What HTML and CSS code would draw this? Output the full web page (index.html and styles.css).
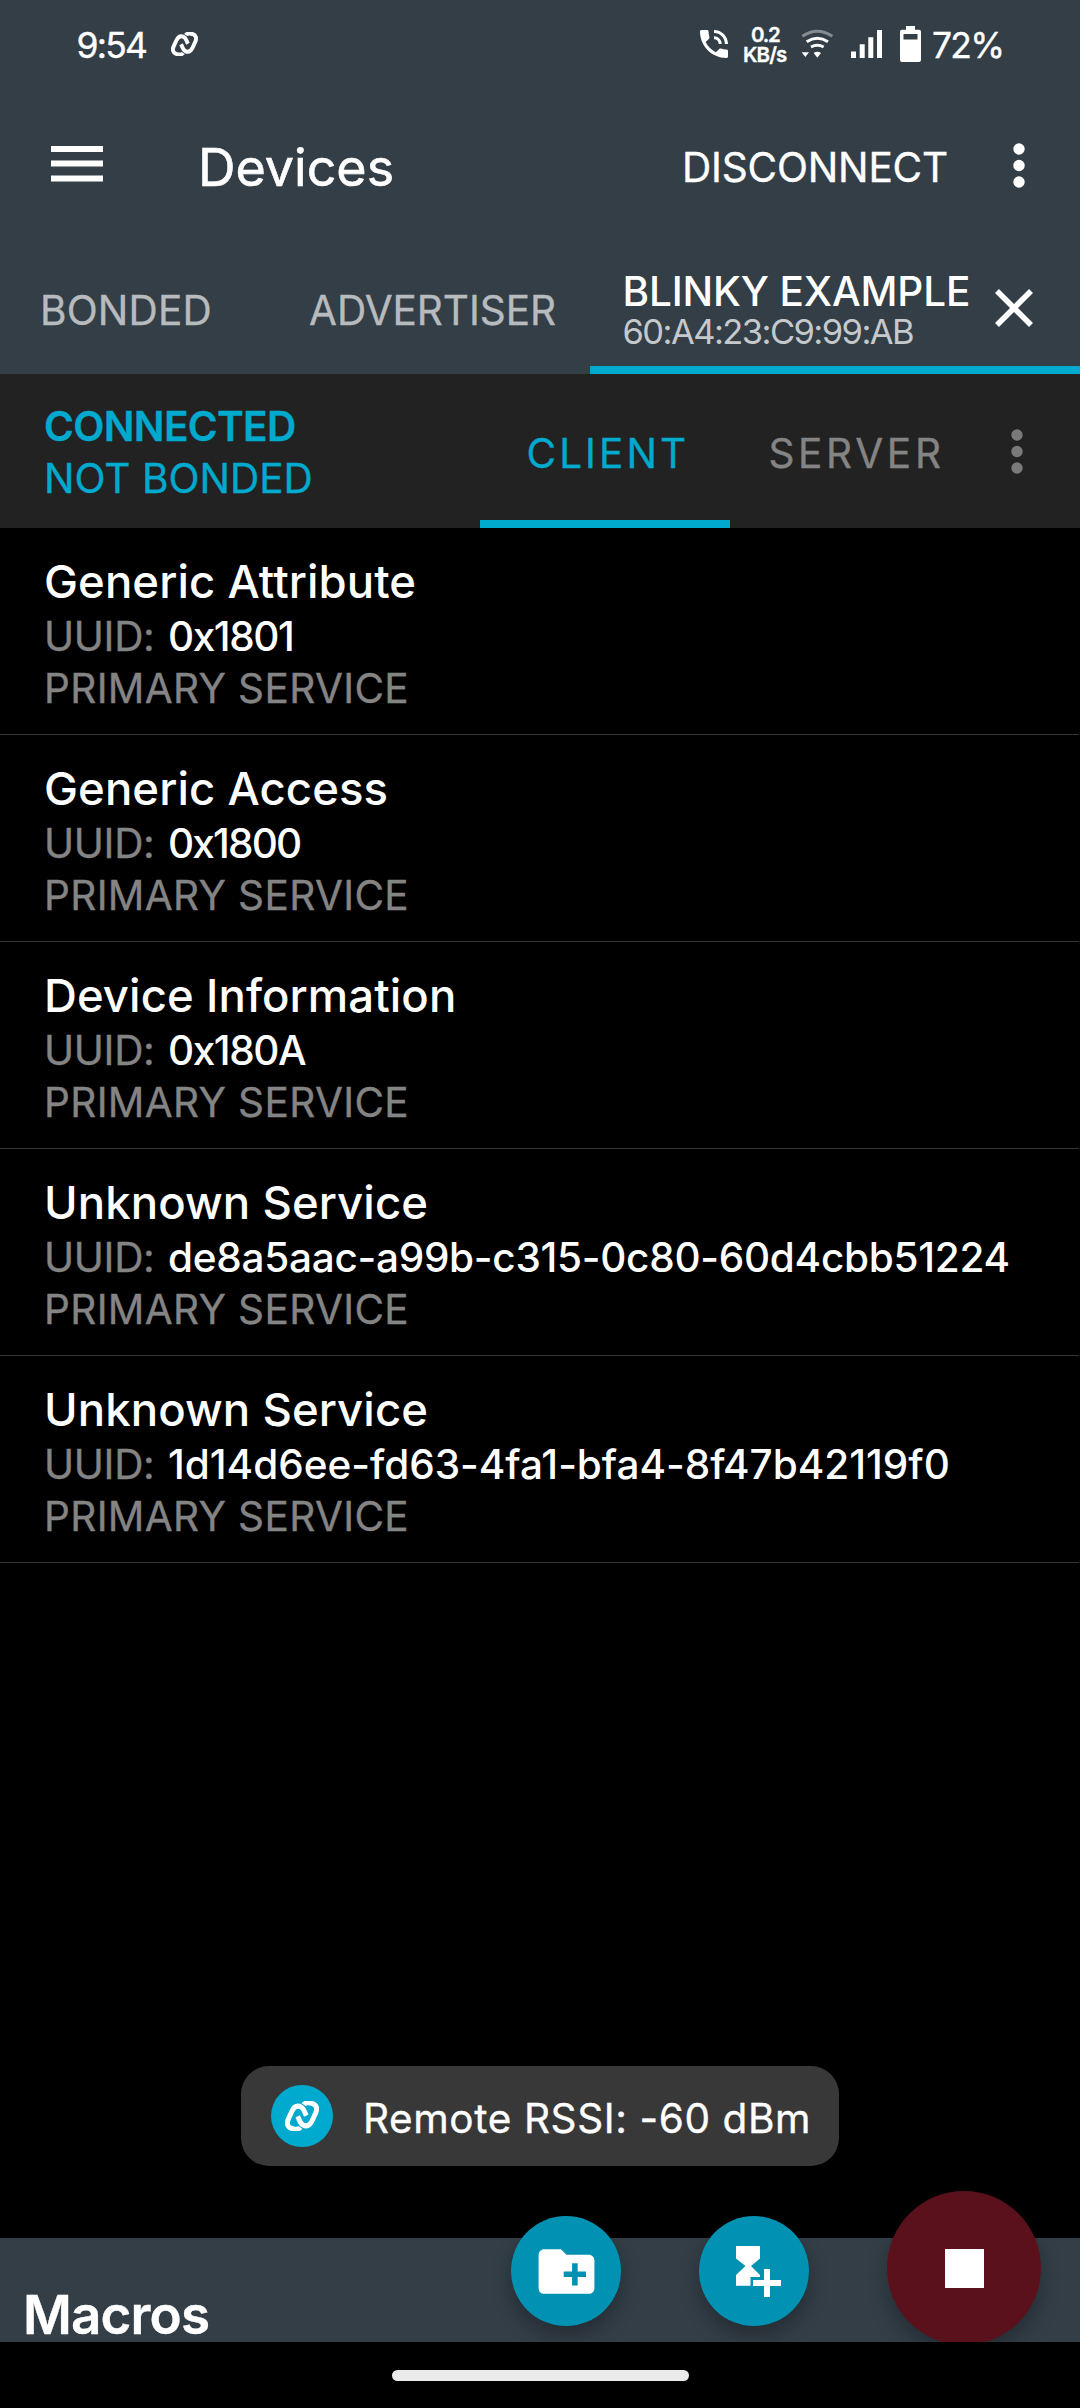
FILE: index.html
```
<!DOCTYPE html>
<html lang="en">
<head>
<meta charset="utf-8">
<title>Devices</title>
<link rel="stylesheet" href="styles.css">
</head>
<body>
<svg class="defs" width="0" height="0">
  <symbol id="link" viewBox="0 0 102 90">
    <g fill="none" stroke="currentColor" stroke-width="15">
      <path d="M46 79C42 85 30 87 19 82C6 77 5 66 10 54L21 30C28 16 38 13 48 18C57 22 58 33 64 44"/>
      <path d="M56 11C60 5 72 3 83 8C96 13 97 24 92 36L81 60C74 74 64 77 54 72C45 68 44 57 38 46"/>
    </g>
  </symbol>
  <symbol id="dots" viewBox="0 0 12 45">
    <circle cx="6" cy="6" r="5.700"/><circle cx="6" cy="22.500" r="5.700"/><circle cx="6" cy="39" r="5.700"/>
  </symbol>
</svg>
<div class="app">
  <header class="header">
    <div class="status">
      <span class="time">9:54</span>
      <svg class="status-link"><use href="#link"/></svg>
      <div class="status-right">
        <svg class="phone" viewBox="3 3 18 18"><path d="M20 15.5c-1.25 0-2.45-.2-3.57-.57-.35-.11-.74-.03-1.02.24l-2.2 2.2c-2.83-1.44-5.15-3.75-6.59-6.59l2.2-2.21c.28-.26.36-.65.25-1C8.7 6.45 8.5 5.25 8.5 4c0-.55-.45-1-1-1H4c-.55 0-1 .45-1 1 0 9.39 7.61 17 17 17 .55 0 1-.45 1-1v-3.5c0-.55-.45-1-1-1zM19 12h2c0-4.97-4.03-9-9-9v2c3.87 0 7 3.13 7 7zm-4 0h2c0-2.76-2.24-5-5-5v2c1.66 0 3 1.34 3 3z"/></svg>
        <div class="net"><span class="net-rate">0.2</span><span class="net-unit">KB/s</span></div>
        <svg class="wifi" viewBox="0 0 99 86">
          <g fill="none" stroke="#fff" stroke-width="9">
            <path d="M4 22Q49 -9 94 22" stroke="#848b91"/>
            <path d="M17 38Q49 18 81 38"/>
            <path d="M30 54Q49 44 68 54"/>
          </g>
          <path d="M2 70H24L13 84ZM38 72Q49 65 60 72L49 86Z"/>
        </svg>
        <svg class="signal" viewBox="0 0 31 28"><path d="M0 21.5h5V28H0zM8.7 14.3h5V28h-5zM17.3 7.3h5V28h-5zM26 0h5v28h-5z"/></svg>
        <svg class="battery" viewBox="0 0 21 36"><path fill-rule="evenodd" d="M6 0h9v3.7h4a2 2 0 0 1 2 2V34a2 2 0 0 1-2 2H2a2 2 0 0 1-2-2V5.700a2 2 0 0 1 2-2h4zM3.500 8v5.500h14V8z"/></svg>
        <span class="percent">72%</span>
      </div>
    </div>
    <div class="toolbar">
      <svg class="menu" viewBox="0 0 52 36"><path d="M0 0h52v6H0zM0 14.500h52v6H0zM0 29.500h52v6H0z"/></svg>
      <h1 class="title">Devices</h1>
      <span class="disconnect">DISCONNECT</span>
      <svg class="more"><use href="#dots"/></svg>
    </div>
    <nav class="tabs">
      <span class="tab bonded">BONDED</span>
      <span class="tab advertiser">ADVERTISER</span>
      <div class="tab device">
        <div class="device-text">
          <span class="device-name">BLINKY EXAMPLE</span>
          <span class="device-mac">60:A4:23:C9:99:AB</span>
        </div>
        <svg class="close" viewBox="0 0 38 38"><path d="M2 2L36 36M36 2L2 36" stroke="#fff" stroke-width="5.600"/></svg>
      </div>
    </nav>
  </header>
  <section class="connection">
    <div class="state">
      <span class="connected">CONNECTED</span>
      <span class="bond">NOT BONDED</span>
    </div>
    <span class="role client">CLIENT</span>
    <span class="role server">SERVER</span>
    <svg class="more sub"><use href="#dots"/></svg>
  </section>
  <main class="services">
    <article class="service">
      <h2 class="name">Generic Attribute</h2>
      <p class="uuid"><span class="label">UUID:</span><span class="short">0x1801</span></p>
      <p class="kind">PRIMARY SERVICE</p>
    </article>
    <article class="service">
      <h2 class="name">Generic Access</h2>
      <p class="uuid"><span class="label">UUID:</span><span class="short wide">0x1800</span></p>
      <p class="kind">PRIMARY SERVICE</p>
    </article>
    <article class="service">
      <h2 class="name">Device Information</h2>
      <p class="uuid"><span class="label">UUID:</span><span class="short">0x180A</span></p>
      <p class="kind">PRIMARY SERVICE</p>
    </article>
    <article class="service">
      <h2 class="name">Unknown Service</h2>
      <p class="uuid"><span class="label">UUID:</span><span class="long">de8a5aac-a99b-c315-0c80-60d4cbb51224</span></p>
      <p class="kind">PRIMARY SERVICE</p>
    </article>
    <article class="service">
      <h2 class="name">Unknown Service</h2>
      <p class="uuid"><span class="label">UUID:</span><span class="full">1d14d6ee-fd63-4fa1-bfa4-8f47b42119f0</span></p>
      <p class="kind">PRIMARY SERVICE</p>
    </article>
  </main>
  <footer class="macros">Macros</footer>
  <div class="toast">
    <span class="toast-icon"><svg><use href="#link"/></svg></span>
    <span class="toast-text">Remote RSSI: -60 dBm</span>
  </div>
  <div class="fabs">
    <span class="fab"><svg width="67" height="67" viewBox="0 0 24 24"><path d="M20 6h-8l-2-2H4c-1.110 0-1.990.89-1.990 2L2 18c0 1.110.89 2 2 2h16c1.110 0 2-.89 2-2V8c0-1.110-.89-2-2-2zm-1 8h-3v3h-2v-3h-3v-2h3V9h2v3h3v2z"/></svg></span>
    <span class="fab"><svg class="hourglass" width="45" height="51" viewBox="0 0 45 51"><path d="M0 0H24V12.500L15 20L24 29V31H14.500V39.700H0V29L9.500 20L0 12.500ZM28 23h6v11h11v6H34v11h-6V40H17v-6h11z"/></svg></span>
    <span class="fab stop"><span class="square"></span></span>
  </div>
</div>
<div class="navbar"><span class="pill"></span></div>
</body>
</html>
```
FILE: styles.css
```
* { box-sizing: border-box; margin: 0; padding: 0; }
body {
  width: 1080px;
  height: 2408px;
  display: flex;
  flex-direction: column;
  background: #000;
  color: #fff;
  font-family: Inter, Roboto, sans-serif;
  font-size: 40.5px;
  font-weight: 400;
  -webkit-text-stroke: .35px;
  white-space: nowrap;
  overflow: hidden;
}
h1, h2 { font-weight: inherit; }
svg { display: block; flex: none; fill: currentColor; }
.defs { position: absolute; }

.app {
  position: relative;
  height: 2342px;
  display: flex;
  flex-direction: column;
  overflow: hidden;
}
.header { background: #333e47; height: 374px; }

.status {
  height: 92px;
  display: flex;
  align-items: flex-start;
  padding-left: 76.5px;
}
.time, .percent { font-size: 35.5px; line-height: 92px; letter-spacing: -1.8px; }
.time { width: 94.5px; }
.status-link { width: 27px; height: 24px; margin-top: 32px; }
.status-right { display: flex; align-items: flex-start; margin-left: auto; }
.phone { width: 28px; height: 28px; margin-top: 29.5px; }
.net {
  width: 45px;
  margin: 24.5px 0 0 15.5px;
  display: flex;
  flex-direction: column;
  font-size: 20.5px;
  font-weight: 600;
  line-height: 20px;
}
.net-rate { padding-left: 8px; letter-spacing: -1.2px; }
.net-unit { letter-spacing: -.9px; }
.wifi { width: 33px; height: 28.7px; margin: 29px 0 0 13px; }
.signal { width: 31px; height: 28px; margin: 29.7px 0 0 17px; }
.battery { width: 21px; height: 36px; margin: 26px 0 0 18px; }
.percent { width: 148px; margin-left: 11px; }

.toolbar {
  height: 150px;
  display: flex;
  align-items: center;
  padding: 0 55px 0 51px;
}
.menu { width: 52px; height: 36px; margin-top: -7px; }
.title { margin: 2px 0 0 95px; font-size: 52px; line-height: 60px; letter-spacing: 0; -webkit-text-stroke: .6px; }
.disconnect { width: 331px; margin-left: auto; letter-spacing: -.18px; }
.more { width: 12px; height: 45px; margin-top: -4px; }

.tabs { height: 132px; display: flex; }
.tab { display: flex; align-items: center; padding-top: 4px; }
.bonded, .advertiser { color: #b7bbbe; }
.bonded { width: 269px; padding-left: 40px; letter-spacing: .2px; }
.advertiser { width: 321px; padding-left: 40px; letter-spacing: -.06px; }
.device {
  flex: 1;
  align-items: flex-start;
  padding: 30px 47px 0 32.5px;
  border-bottom: 8px solid #00a9ce;
}
.device-text { display: flex; flex-direction: column; }
.device-name { line-height: 40px; font-weight: 500; letter-spacing: -.15px; -webkit-text-stroke: 0; }
.device-mac { line-height: 40px; font-size: 34.5px; color: #c5c9cc; letter-spacing: -1.56px; -webkit-text-stroke: 0; }
.close { width: 38px; height: 38px; margin: 16.5px 0 0 auto; }

.connection {
  height: 154px;
  display: flex;
  align-items: center;
  background: #222;
}
.state {
  width: 480px;
  padding: 4px 0 0 44px;
  display: flex;
  flex-direction: column;
  line-height: 52.500px;
  color: #00a9ce;
}
.connected { font-weight: 600; letter-spacing: -.64px; }
.bond { letter-spacing: .02px; }
.role { height: 154px; line-height: 159px; }
.client {
  width: 250px;
  padding-left: 46.5px;
  border-bottom: 8px solid #00a9ce;
  color: #00a9ce;
  letter-spacing: 3.06px;
}
.server { width: 281px; padding-left: 38.4px; color: #848484; letter-spacing: 3.7px; }
.more.sub { margin-top: 0; color: #7a7a7a; }

.services { height: 1710px; }
.service {
  width: 1079px;
  height: 207px;
  padding: 26px 0 0 44px;
  border-bottom: 1px solid #363636;
}
.name { font-size: 45.5px; font-weight: 500; line-height: 56px; letter-spacing: .08px; -webkit-text-stroke: 0; }
.uuid { display: flex; line-height: 53px; font-weight: 500; -webkit-text-stroke: 0; }
.label { width: 124px; font-weight: 400; color: #848484; letter-spacing: -.34px; -webkit-text-stroke: .35px; }
.short { letter-spacing: -1.43px; font-variant-ligatures: no-contextual; }
.short.wide { letter-spacing: -1.83px; }
.long { letter-spacing: -.28px; }
.full { letter-spacing: -.02px; }
.kind { line-height: 52px; color: #848484; letter-spacing: .35px; }

.macros {
  height: 104px;
  padding: 47px 0 0 23px;
  background: #333e47;
  font-size: 53px;
  font-weight: 600;
  line-height: 60px;
  letter-spacing: -.87px;
}

.toast {
  position: absolute;
  left: 241px;
  top: 2066px;
  width: 598px;
  height: 100px;
  padding-left: 30px;
  display: flex;
  align-items: center;
  border-radius: 28px;
  background: #383838;
}
.toast-icon {
  width: 62px;
  height: 62px;
  display: flex;
  align-items: center;
  justify-content: center;
  border-radius: 50%;
  background: #00a9ce;
}
.toast-icon svg { width: 34px; height: 30px; }
.toast-text { margin-left: 30px; padding-top: 5px; letter-spacing: .6px; }

.fabs {
  position: absolute;
  left: 511px;
  top: 2191px;
  display: flex;
  align-items: flex-start;
  gap: 78px;
}
.fab {
  width: 110px;
  height: 110px;
  margin-top: 25px;
  display: flex;
  align-items: center;
  justify-content: center;
  border-radius: 50%;
  background: #0091b3;
  box-shadow: 0 10px 20px rgba(0, 0, 0, .28);
}
.hourglass { margin: 1px 0 0 9px; }
.fab.stop { width: 154px; height: 154px; margin-top: 0; background: #5b111c; }
.square { width: 39px; height: 39px; background: #fff; }

.navbar {
  height: 66px;
  display: flex;
  align-items: center;
  justify-content: center;
}
.pill { width: 297px; height: 11px; border-radius: 6px; background: #ebebeb; }
```
